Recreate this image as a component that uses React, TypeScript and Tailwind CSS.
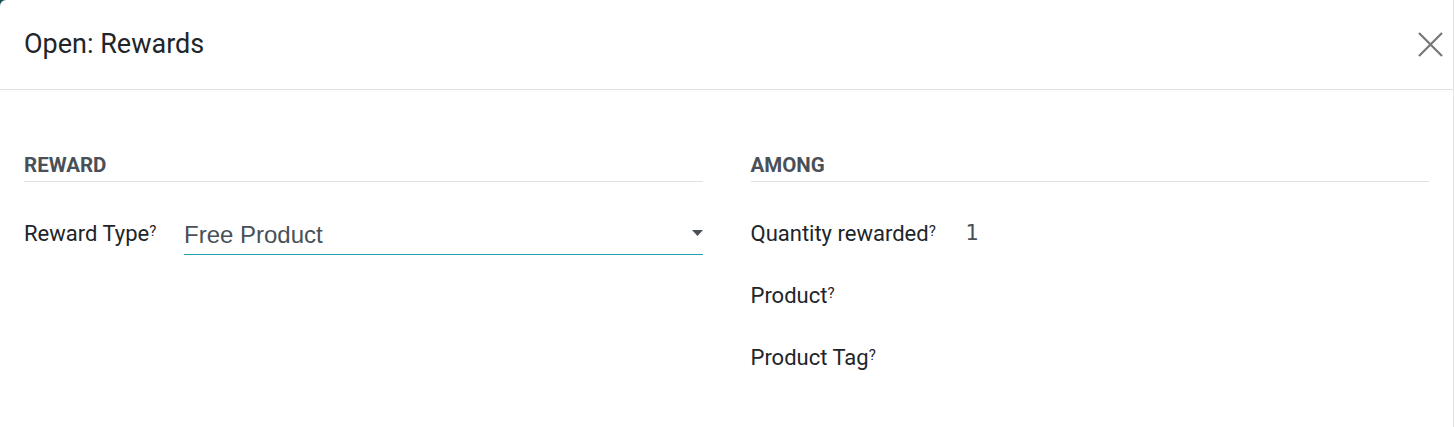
import React from "react";

const Help = () => (
  <sup className="text-[15px] text-[#212529] relative -top-[5px]">?</sup>
);

function Field({ label, width, children }: { label: string; width: string; children?: React.ReactNode }) {
  return (
    <div className="flex items-center h-[40px] mb-[22px]">
      <div className={`${width} shrink-0 text-[22px] text-[#212529] whitespace-nowrap`}>
        {label}
        <Help />
      </div>
      <div className="flex-1">{children}</div>
    </div>
  );
}

export default function App() {
  return (
    <div className="w-[1454px] h-[427px] bg-[#1d4f52]" style={{ fontFamily: "Roboto, 'Noto Sans', sans-serif" }}>
      <div className="h-full bg-white rounded-tl-[6px] border-r border-[#e4e4e4]">
        <div className="h-[90px] flex items-center justify-between px-6 border-b border-[#dee2e6]">
          <h1 className="text-[27px] text-[#212529]">Open: Rewards</h1>
          <button className="text-[#777] mr-[-14px]" aria-label="Close">
            <svg width="25" height="25" viewBox="0 0 25 25" fill="none" stroke="currentColor" strokeWidth="2.2">
              <path d="M1 1 L24 24 M24 1 L1 24" />
            </svg>
          </button>
        </div>

        <div className="grid grid-cols-2 gap-12 px-6 pt-[62px]">
          <div>
            <h2 className="text-[20.5px] font-bold text-[#495057] border-b border-[#dee2e6] pb-[3px] mb-[31px] leading-[26px]">REWARD</h2>
            <Field label="Reward Type" width="w-[160px]">
              <div className="relative border-b border-[#21a1b3] h-[41px] flex items-center mt-[2px]">
                <span className="text-[24px] text-[#495057] pt-[2px]" style={{ fontFamily: "'Liberation Sans', Arial, sans-serif" }}>
                  Free Product
                </span>
                <svg className="absolute right-0 top-[16px]" width="11" height="6" viewBox="0 0 11 6">
                  <path d="M0 0 H11 L5.5 6 Z" fill="#495057" />
                </svg>
              </div>
            </Field>
          </div>

          <div>
            <h2 className="text-[20.5px] font-bold text-[#495057] border-b border-[#dee2e6] pb-[3px] mb-[31px] leading-[26px]">AMONG</h2>
            <Field label="Quantity rewarded" width="w-[215px]">
              <span className="text-[21px] text-[#495057] relative top-[1px]" style={{ fontFamily: "'DejaVu Sans', sans-serif" }}>1</span>
            </Field>
            <Field label="Product" width="w-[215px]" />
            <Field label="Product Tag" width="w-[215px]" />
          </div>
        </div>
      </div>
    </div>
  );
}
